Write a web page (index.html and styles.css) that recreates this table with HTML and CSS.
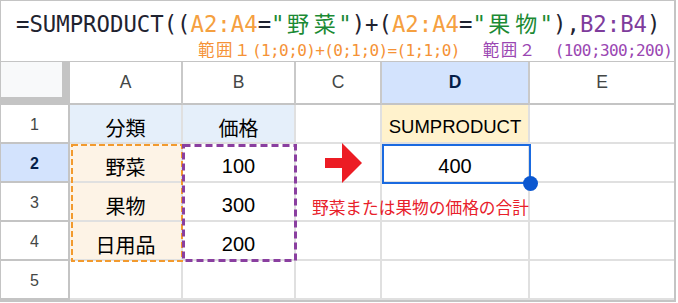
FILE: index.html
```html
<!DOCTYPE html>
<html lang="ja">
<head>
<meta charset="utf-8">
<title>SUMPRODUCT</title>
<link rel="stylesheet" href="styles.css">
</head>
<body>
<div class="frame">
  <div class="formula">
    <div class="f-line"><span class="dk">=SUMPRODUCT((</span><span class="or">A2:A4</span><span class="dk">=</span><span class="gr">"<span class="zw">野</span><span class="zw">菜</span>"</span><span class="dk">)+(</span><span class="or">A2:A4</span><span class="dk">=</span><span class="gr">"<span class="zw">果</span><span class="zw">物</span>"</span><span class="dk">),</span><span class="pu">B2:B4</span><span class="dk">)</span></div>
    <div class="notes">
      <span class="n1"><span class="zn">範囲１</span>(1;0;0)+(0;1;0)=(1;1;0)</span>
      <span class="n2"><span class="zn">範囲２　</span>(100;300;200)</span>
    </div>
  </div>
  <div class="sheet">
    <div class="corner"></div>
    <div class="ch">A</div>
    <div class="ch">B</div>
    <div class="ch">C</div>
    <div class="ch ch-sel">D</div>
    <div class="ch last">E</div>

    <div class="rh">1</div>
    <div class="cell head-blue">分類</div>
    <div class="cell head-blue">価格</div>
    <div class="cell"></div>
    <div class="cell head-yellow sp">SUMPRODUCT</div>
    <div class="cell last"></div>

    <div class="rh rh-sel">2</div>
    <div class="cell cat">野菜</div>
    <div class="cell">100</div>
    <div class="cell"></div>
    <div class="cell">400</div>
    <div class="cell last"></div>

    <div class="rh">3</div>
    <div class="cell cat">果物</div>
    <div class="cell">300</div>
    <div class="cell note-cell"><span class="note">野菜または果物の価格の合計</span></div>
    <div class="cell"></div>
    <div class="cell last"></div>

    <div class="rh">4</div>
    <div class="cell cat">日用品</div>
    <div class="cell">200</div>
    <div class="cell"></div>
    <div class="cell"></div>
    <div class="cell last"></div>

    <div class="rh">5</div>
    <div class="cell"></div>
    <div class="cell"></div>
    <div class="cell"></div>
    <div class="cell"></div>
    <div class="cell last"></div>

    <svg class="marks" width="673" height="238" viewBox="0 0 673 238">
      <rect x="71" y="83" width="110" height="116" fill="none" stroke="#f29a2e" stroke-width="2" stroke-dasharray="6 3"/>
      <rect x="182.5" y="83.5" width="112" height="115" fill="none" stroke="#8a3fa0" stroke-width="3" stroke-dasharray="7 4"/>
      <path d="M324 96 H341 V81 L361 101 L341 121 V106 H324 Z" fill="#ec1c24"/>
    </svg>
    <div class="selection"></div>
    <div class="handle"></div>
  </div>
</div>
</body>
</html>
```
FILE: styles.css
```css
* { box-sizing: border-box; }
html, body { margin: 0; padding: 0; background: #ffffff; }

.frame {
  width: 676px;
  height: 302px;
  border-style: solid;
  border-color: #c4c4c4;
  border-width: 1px 2px 2px 1px;
  background: #ffffff;
  overflow: hidden;
}

.formula {
  height: 61px;
  border-bottom: 1px solid #c4c4c4;
  padding: 10px 0 0 15px;
}

.f-line {
  font-family: "DejaVu Sans Mono", "Noto Sans CJK JP", monospace;
  font-size: 22.3px;
  line-height: 26px;
  white-space: nowrap;
  color: #1f2330;
}
.f-line .zw {
  display: inline-block;
  width: 26.85px;
  text-align: center;
  font-family: "Noto Sans CJK JP", sans-serif;
  font-size: 22px;
  line-height: 20px;
}
.dk { color: #1f2330; }
.or { color: #f5a040; }
.gr { color: #1b8a34; }
.pu { color: #7e3c9c; }

.notes {
  display: flex;
  gap: 23px;
  margin-top: 4px;
  padding-left: 182px;
  font-family: "DejaVu Sans Mono", "Noto Sans CJK JP", monospace;
  font-size: 16px;
  letter-spacing: -0.6px;
  line-height: 18px;
  white-space: nowrap;
}
.notes .zn {
  font-family: "Noto Sans CJK JP", sans-serif;
  font-size: 16.5px;
  letter-spacing: 1.5px;
  line-height: 16px;
}
.n1 { color: #f59236; }
.n2 { color: #9a46b2; }

.sheet {
  position: relative;
  display: grid;
  grid-template-columns: 69px 113px 113px 86px 148px 144px;
  grid-template-rows: 43px repeat(5, 39px);
  font-family: "Liberation Sans", "Noto Sans CJK JP", sans-serif;
}

.corner {
  background: #f8f9fa;
  border-right: 8px solid #c4c4c4;
  border-bottom: 8px solid #c4c4c4;
}

.ch {
  display: flex;
  align-items: center;
  justify-content: center;
  border-right: 2px solid #c9c9c9;
  border-bottom: 2px solid #c4c4c4;
  font-size: 17.5px;
  color: #444746;
  background: #ffffff;
}
.ch.last { border-right: none; }
.ch-sel {
  background: #d3e3fd;
  color: #041e49;
  font-weight: bold;
}

.rh {
  display: flex;
  align-items: center;
  justify-content: center;
  padding-top: 2px;
  border-right: 2px solid #c4c4c4;
  border-bottom: 2px solid #c4c4c4;
  font-size: 16px;
  color: #444746;
}
.rh-sel {
  background: #d3e3fd;
  color: #041e49;
  font-weight: bold;
}

.cell {
  display: flex;
  align-items: center;
  justify-content: center;
  padding-top: 7px;
  border-right: 2px solid #e0e0e0;
  border-bottom: 2px solid #e0e0e0;
  font-size: 20px;
  color: #000000;
  white-space: nowrap;
}
.cell.last { border-right: none; }
.head-blue { background: #e5effa; }
.head-yellow { background: #fff2cc; }
.sp { font-size: 18.5px; }
.cat { background: #fdf3e6; }

.note-cell {
  justify-content: flex-start;
  padding-left: 16px;
  padding-top: 11px;
  overflow: visible;
}
.note {
  position: relative;
  z-index: 1;
  font-family: "Noto Sans CJK JP", sans-serif;
  font-size: 16.7px;
  color: #e8202a;
}

.marks {
  position: absolute;
  left: 0;
  top: 0;
  pointer-events: none;
}

.selection {
  position: absolute;
  left: 381px;
  top: 82px;
  width: 149px;
  height: 40px;
  border: 2.5px solid #1a6ae0;
}
.handle {
  position: absolute;
  left: 522px;
  top: 114px;
  width: 15px;
  height: 15px;
  border-radius: 50%;
  background: #0b57d0;
}
```
